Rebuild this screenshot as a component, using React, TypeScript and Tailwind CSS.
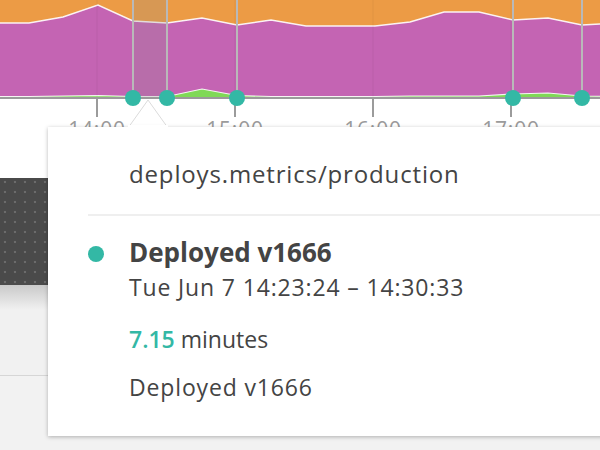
import React from "react";

const xs = [-6, 29, 63, 98, 133, 167, 202, 237, 271, 306, 341, 375, 410, 444, 479, 513, 548, 582, 617];
const topY = [23, 23, 17, 5, 21, 23, 18, 25, 20, 26, 26, 26, 22, 12, 12, 20, 18, 25, 23];
const greenY = [96.5, 96.5, 96, 95.5, 96.5, 96.5, 89, 95.5, 96.5, 96.5, 96.5, 96.5, 96, 96, 96, 94, 93, 96, 96.5];

const line = (ys: number[]) => xs.map((x, i) => `${i === 0 ? "M" : "L"}${x} ${ys[i]}`).join(" ");

function Chart() {
  const base = 97;
  const magentaPath = `${line(topY)} L617 ${base} L-6 ${base} Z`;
  const greenPath = `${line(greenY)} L617 ${base} L-6 ${base} Z`;
  const ticks = [
    { x: 97, label: "14:00" },
    { x: 235, label: "15:00" },
    { x: 373, label: "16:00" },
    { x: 511, label: "17:00" },
  ];
  const deploys = [133, 167, 237, 513, 582];
  return (
    <svg width="600" height="127" viewBox="0 0 600 127" className="block">
      <rect x="0" y="0" width="600" height={base} fill="#ec9b45" />
      <path d={magentaPath} fill="#c464b3" />
      <path d={line(topY)} fill="none" stroke="#ffffff" strokeWidth="1.5" strokeOpacity="0.9" />
      <path d={greenPath} fill="#80d957" />
      <path d={line(greenY)} fill="none" stroke="#ffffff" strokeWidth="1.2" strokeOpacity="0.9" />
      {ticks.map((t) => (
        <rect key={t.x} x={t.x - 0.5} y="0" width="1" height={base} fill="#000" fillOpacity="0.05" />
      ))}
      <rect x="133" y="0" width="34" height={base + 1} fill="#8c8c8c" fillOpacity="0.22" />
      <rect x="0" y="97" width="600" height="2" fill="#9b9b9b" />
      {ticks.map((t) => (
        <g key={t.label}>
          <rect x={t.x - 1} y="99" width="2" height="18" fill="#9b9b9b" />
          <text
            x={t.x}
            y="137"
            textAnchor="middle"
            fontSize="21"
            letterSpacing="0.8"
            fill="#9b9b9b"
            fontFamily="'Open Sans', sans-serif"
          >
            {t.label}
          </text>
        </g>
      ))}
      {deploys.map((x) => (
        <g key={x}>
          <rect x={x - 1} y="0" width="2" height="98" fill="#b9b9b9" />
          <circle cx={x} cy="98" r="8" fill="#33b8a5" />
        </g>
      ))}
    </svg>
  );
}

export default function App() {
  return (
    <div
      className="relative w-[600px] h-[450px] overflow-hidden bg-white"
      style={{ fontFamily: "'Open Sans', 'Liberation Sans', sans-serif" }}
    >
      <Chart />
      <div className="flex flex-col">
        <div className="h-[51px] bg-white" />
        <div className="h-[107px] bg-[#4a4a4a] bg-[radial-gradient(circle,#6b6b6b_1.1px,transparent_1.6px)] bg-[length:10px_10px] bg-[position:0px_-1px]" />
        <div className="h-[25px] bg-[linear-gradient(to_bottom,#c9c9c9,#f1f1f1)]" />
        <div className="h-[65px] bg-[#f1f1f1]" />
        <div className="h-[1px] bg-[#d6d6d6]" />
        <div className="h-[80px] bg-[#f2f2f2]" />
      </div>

      {/* pointer */}
      <svg className="absolute left-[126px] top-[99px]" width="44" height="30" viewBox="0 0 44 30">
        <polygon points="2,29 22,1 42,29" fill="#ffffff" stroke="#dcdcdc" strokeWidth="1" />
      </svg>

      {/* tooltip */}
      <div className="absolute left-[48px] top-[127px] w-[580px] h-[309px] bg-white shadow-[0_1px_4px_rgba(0,0,0,0.28)] text-[#444444] tracking-[0.85px]">
        <svg className="absolute left-[78px] -top-[2px]" width="44" height="4" viewBox="0 0 44 4">
          <rect x="2" y="0" width="40" height="4" fill="#ffffff" />
        </svg>
        <div className="h-[87px] pt-[33px] pl-[81px]">
          <div className="text-[24px] leading-[28px]">deploys.metrics/production</div>
        </div>
        <div className="ml-[40px] h-[2px] bg-[#efefef]" />
        <div className="relative pl-[81px] pt-[20px]">
          <div className="absolute left-[40px] top-[30px] w-[16px] h-[16px] rounded-full bg-[#33b8a5]" />
          <div className="text-[26px] leading-[32px] font-bold tracking-normal">Deployed v1666</div>
          <div className="mt-[5px] text-[23px] leading-[28px]">Tue Jun 7 14:23:24 – 14:30:33</div>
          <div className="mt-[24px] text-[23px] leading-[28px] tracking-normal">
            <span className="font-semibold text-[#33b8a5]">7.15</span> minutes
          </div>
          <div className="mt-[20px] text-[23px] leading-[28px]">Deployed v1666</div>
        </div>
      </div>
    </div>
  );
}
